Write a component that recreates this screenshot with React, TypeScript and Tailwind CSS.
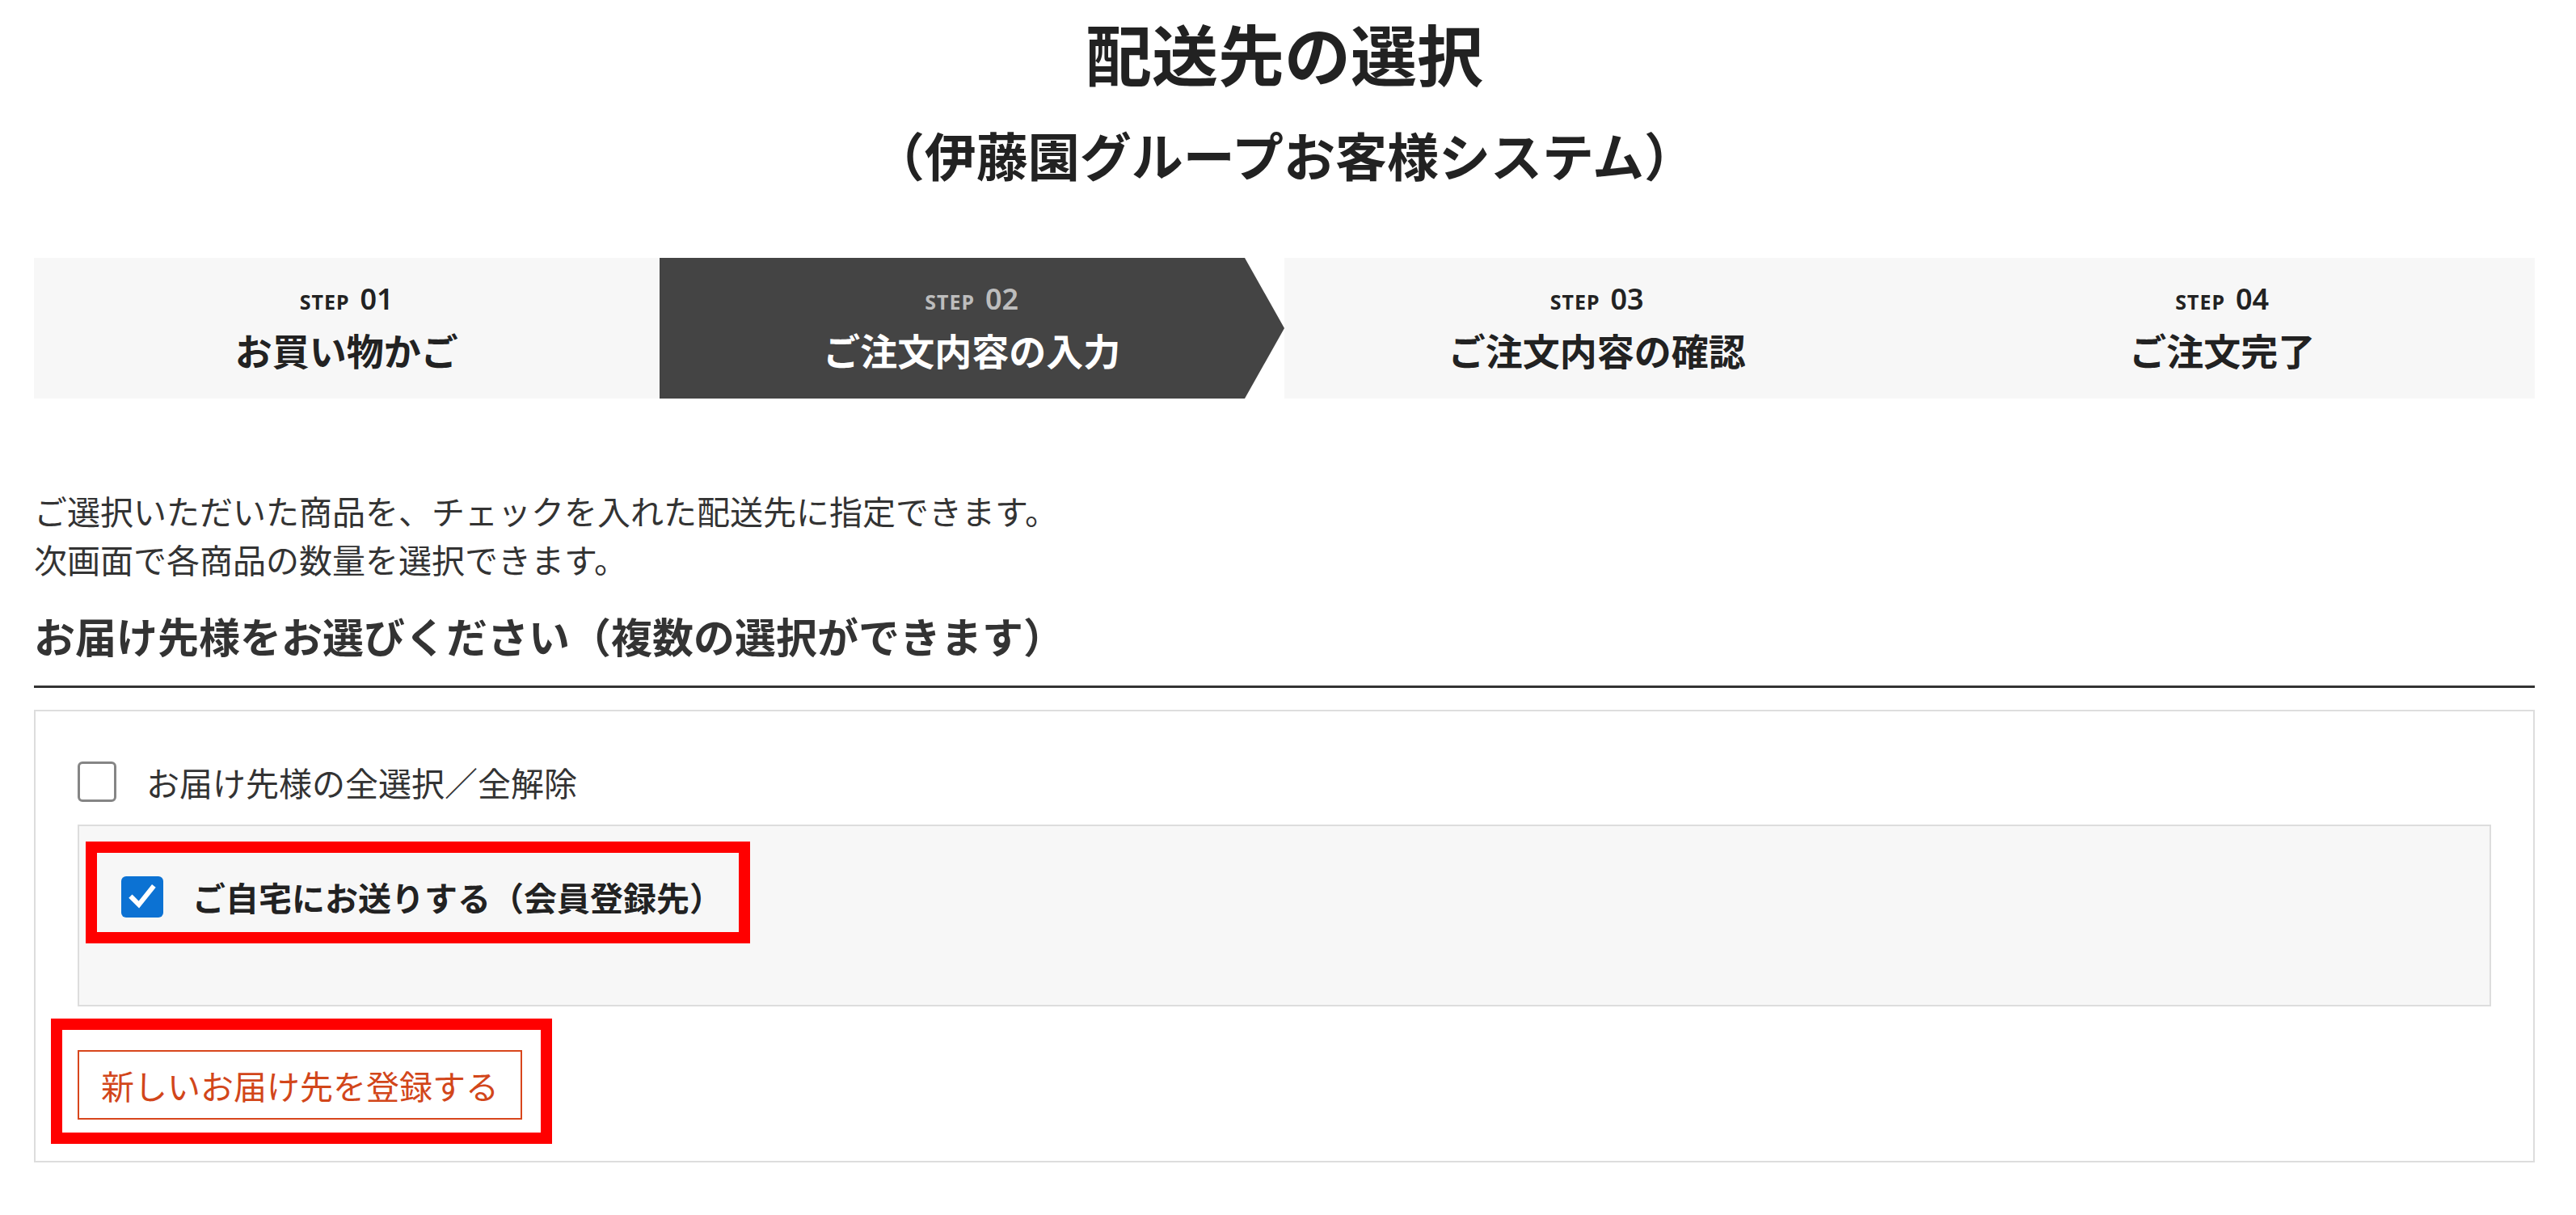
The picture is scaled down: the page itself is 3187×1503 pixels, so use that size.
import React from "react";

const steps = [
  { no: "01", label: "お買い物かご", active: false },
  { no: "02", label: "ご注文内容の入力", active: true },
  { no: "03", label: "ご注文内容の確認", active: false },
  { no: "04", label: "ご注文完了", active: false },
];

export default function App() {
  return (
    <div className="min-h-[1503px] w-full bg-white text-[#333] font-['Noto_Sans_CJK_JP','Noto_Sans',sans-serif]">
      <div className="ml-[42px] w-[3094px]">
        <h1 className="text-center text-[82px] font-bold leading-[130px] text-[#222]">配送先の選択</h1>
        <p className="mt-[15px] text-center text-[64px] font-bold leading-[90px] text-[#222]">
          （伊藤園グループお客様システム）
        </p>

        <div className="mt-[84px] grid h-[174px] grid-cols-4">
          {steps.map((s) =>
            s.active ? (
              <div
                key={s.no}
                className="flex flex-col items-center justify-center bg-[#444] [clip-path:polygon(0_0,calc(100%_-_49px)_0,100%_50%,calc(100%_-_49px)_100%,0_100%)]"
              >
                <div className="flex h-[40px] items-baseline gap-[13px] leading-[40px] text-[#bdbdbd]">
                  <span className="font-['Noto_Sans',sans-serif] text-[25px] font-bold tracking-[1px]">STEP</span>
                  <span className="font-['Noto_Sans',sans-serif] text-[36px] font-semibold">{s.no}</span>
                </div>
                <div className="mt-[12px] text-[46px] font-bold leading-[60px] text-white">{s.label}</div>
              </div>
            ) : (
              <div key={s.no} className="flex flex-col items-center justify-center bg-[#f7f7f7]">
                <div className="flex h-[40px] items-baseline gap-[13px] leading-[40px] text-[#222]">
                  <span className="font-['Noto_Sans',sans-serif] text-[25px] font-bold tracking-[1px]">STEP</span>
                  <span className="font-['Noto_Sans',sans-serif] text-[36px] font-semibold">{s.no}</span>
                </div>
                <div className="mt-[12px] text-[46px] font-bold leading-[60px] text-[#222]">{s.label}</div>
              </div>
            )
          )}
        </div>

        <div className="mt-[108px] text-[41px] leading-[60px] text-[#333]">
          <p>ご選択いただいた商品を、チェックを入れた配送先に指定できます。</p>
          <p>次画面で各商品の数量を選択できます。</p>
        </div>

        <h2 className="mt-[30px] border-b-[3px] border-[#333] pb-[27px] text-[51px] font-bold leading-[70px] text-[#333]">
          お届け先様をお選びください（複数の選択ができます）
        </h2>

        <div className="mt-[27px] border-2 border-[#dddddd] px-[52px] pt-[57px] pb-[51px]">
          <label className="flex h-[60px] items-center gap-[37px]">
            <span className="h-[50px] w-[48px] shrink-0 rounded-[6px] border-[3px] border-[#858585] bg-white" />
            <span className="text-[41px] leading-[60px] text-[#333]">お届け先様の全選択／全解除</span>
          </label>

          <div className="mt-[23px] border-2 border-[#dddddd] bg-[#f7f7f7] pl-[52px] pt-[57px] pb-[104px]">
            <div className="relative inline-flex h-[60px] items-center gap-[36px]">
              <span className="flex h-[51px] w-[52px] shrink-0 items-center justify-center rounded-[6px] bg-[#0c72d3]">
                <svg viewBox="0 0 24 24" className="h-[40px] w-[40px]" fill="none">
                  <path d="M4.5 13 L9.5 18 L19.5 5.5" stroke="white" strokeWidth="3.6" strokeLinecap="square" strokeLinejoin="miter" />
                </svg>
              </span>
              <span className="text-[41px] font-bold leading-[60px] text-[#222]">ご自宅にお送りする（会員登録先）</span>
              <div className="pointer-events-none absolute -top-[38px] -right-[34px] -bottom-[28px] -left-[44px] border-[14px] border-[#ff0000]" />
            </div>
          </div>

          <div className="mt-[54px] flex">
            <div className="relative">
              <button className="flex h-[86px] items-center border-2 border-[#d8461c] bg-white px-[27px] text-[41px] leading-none text-[#d2461a]">
                新しいお届け先を登録する
              </button>
              <div className="pointer-events-none absolute -top-[39px] -right-[37px] -bottom-[30px] -left-[33px] border-[14px] border-[#ff0000]" />
            </div>
          </div>
        </div>
      </div>
    </div>
  );
}
